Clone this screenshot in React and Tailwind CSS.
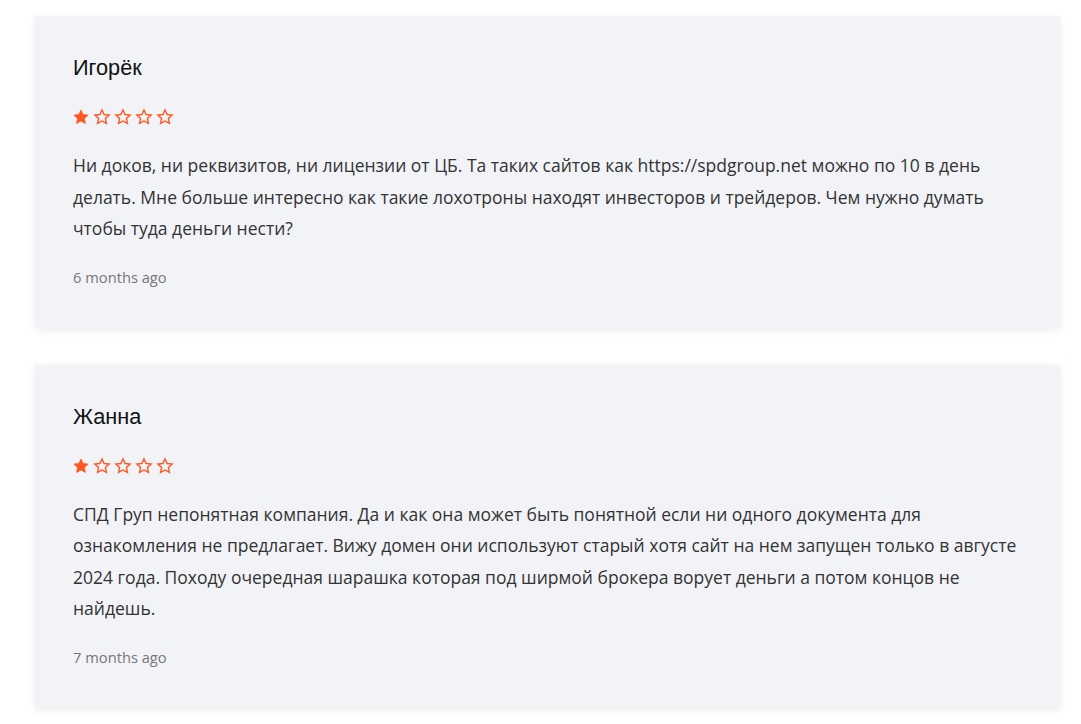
import { Star } from 'lucide-react';

const reviews = [
  {
    name: 'Игорёк',
    rating: 1,
    text: 'Ни доков, ни реквизитов, ни лицензии от ЦБ. Та таких сайтов как https://spdgroup.net можно по 10 в день делать. Мне больше интересно как такие лохотроны находят инвесторов и трейдеров. Чем нужно думать чтобы туда деньги нести?',
    date: '6 months ago',
  },
  {
    name: 'Жанна',
    rating: 1,
    text: 'СПД Груп непонятная компания. Да и как она может быть понятной если ни одного документа для ознакомления не предлагает. Вижу домен они используют старый хотя сайт на нем запущен только в августе 2024 года. Походу очередная шарашка которая под ширмой брокера ворует деньги а потом концов не найдешь.',
    date: '7 months ago',
  },
];

function StarIcon({ filled }) {
  return (
    <svg viewBox="0 0 24 24" className="h-[18px] w-[18px]">
      <path
        d="M12 2.6l2.85 6.1 6.65.78-4.92 4.55 1.3 6.57L12 17.3l-5.88 3.3 1.3-6.57L2.5 9.48l6.65-.78z"
        fill={filled ? '#ff5722' : 'none'}
        stroke="#ff5722"
        strokeWidth={filled ? 1 : 1.9}
        strokeLinejoin="miter"
      />
    </svg>
  );
}

function Rating({ value }) {
  return (
    <div className="flex items-center gap-[3px] -ml-[1px]">
      {[1, 2, 3, 4, 5].map((i) => (
        <StarIcon key={i} filled={i <= value} />
      ))}
    </div>
  );
}

function ReviewCard({ review }) {
  return (
    <div className="bg-[#f2f3f7] shadow-[0_2px_8px_rgba(0,0,0,0.08)] pt-[38px] pb-[41px] pl-[38px] pr-[30px]">
      <div className="font-['Liberation_Sans',Arial,sans-serif] text-[21.7px] leading-[28px] text-[#111]">
        {review.name}
      </div>
      <div className="mt-[26px]">
        <Rating value={review.rating} />
      </div>
      <p className="mt-[24px] font-['Open_Sans',sans-serif] text-[17.5px] leading-[31.5px] text-[#333]">
        {review.text}
      </p>
      <div className="mt-[22px] font-['Open_Sans',sans-serif] text-[14.7px] leading-[20px] text-[#777]">
        {review.date}
      </div>
    </div>
  );
}

export default function App() {
  return (
    <div className="min-h-screen bg-white pt-4 pl-[35px] pr-[21px]">
      <div className="flex flex-col gap-[37px]">
        {reviews.map((r) => (
          <ReviewCard key={r.name} review={r} />
        ))}
      </div>
    </div>
  );
}
